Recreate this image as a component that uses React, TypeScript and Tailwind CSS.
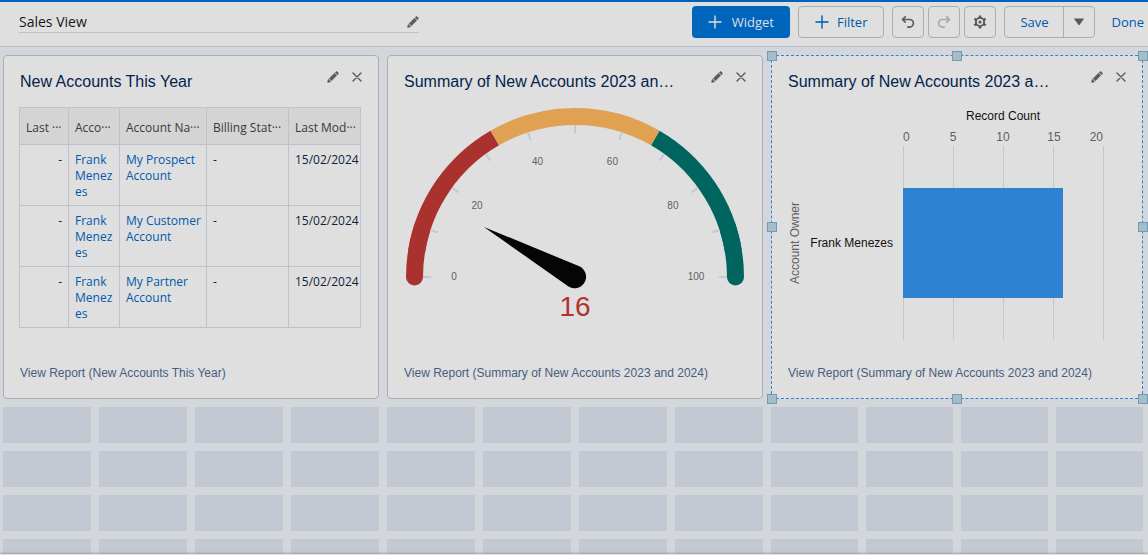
import type { ReactNode } from 'react';

const TITLE_2023_2024 = 'Summary of New Accounts 2023 and 2024';

const COLUMNS = [
  { label: 'Last ···', width: 'w-[49px]' },
  { label: 'Acco···', width: 'w-[51px]' },
  { label: 'Account Na···', width: 'w-[87px]' },
  { label: 'Billing Stat···', width: 'w-[82px]' },
  { label: 'Last Mod···', width: 'w-[72px]' },
];

const ACCOUNTS = [
  { owner: 'Frank Menezes', name: 'My Prospect Account', modified: '15/02/2024' },
  { owner: 'Frank Menezes', name: 'My Customer Account', modified: '15/02/2024' },
  { owner: 'Frank Menezes', name: 'My Partner Account', modified: '15/02/2024' },
];

const HANDLES = [
  '-left-[5px] -top-[5px]',
  'left-1/2 -top-[5px] -translate-x-1/2',
  '-right-[6px] -top-[5px]',
  '-left-[5px] top-1/2 -translate-y-1/2',
  '-right-[6px] top-1/2 -translate-y-1/2',
  '-left-[5px] -bottom-[6px]',
  'left-1/2 -bottom-[6px] -translate-x-1/2',
  '-right-[6px] -bottom-[6px]',
];

function PencilIcon() {
  return (
    <svg viewBox="0 0 52 52" className="size-3" fill="currentColor" stroke="currentColor" strokeWidth="1.5" aria-hidden="true">
      <path d="M9.5 33.4l8.9 8.9c.4.4 1 .4 1.4 0L42 20c.4-.4.4-1 0-1.4l-8.8-8.8c-.4-.4-1-.4-1.4 0L9.5 32.1c-.4.4-.4 1 0 1.3zM36.1 5.7c-.4.4-.4 1 0 1.4l8.8 8.8c.4.4 1 .4 1.4 0l2.5-2.5c1.6-1.5 1.6-3.9 0-5.5l-4.7-4.7c-1.6-1.6-4.1-1.6-5.7 0l-2.3 2.5zM2.1 48.2c-.2 1 .7 1.9 1.7 1.7l10.9-2.6c.4-.1.7-.3.9-.5l.2-.2c.2-.2.3-.9-.1-1.3l-9-9c-.4-.4-1.1-.3-1.3-.1l-.2.2c-.3.3-.4.6-.5.9L2.1 48.2z" />
    </svg>
  );
}

function CloseIcon() {
  return (
    <svg viewBox="0 0 12 12" className="size-3" fill="none" stroke="currentColor" strokeWidth="1.4" strokeLinecap="round" aria-hidden="true">
      <path d="M2 2l8 8M10 2l-8 8" />
    </svg>
  );
}

function PlusIcon() {
  return (
    <svg viewBox="0 0 14 14" className="size-3.5" fill="none" stroke="currentColor" strokeWidth="1.4" strokeLinecap="round" aria-hidden="true">
      <path d="M7 1v12M1 7h12" />
    </svg>
  );
}

function UndoIcon({ className = '' }: { className?: string }) {
  return (
    <svg viewBox="0 0 14 14" className={`size-3.5 ${className}`} fill="none" stroke="currentColor" strokeWidth="1.7" strokeLinecap="round" strokeLinejoin="round" aria-hidden="true">
      <path d="M4.2 1.8L1.6 4.5l2.6 2.7" />
      <path d="M2 4.5h6.6a3.8 3.8 0 0 1 0 7.6H6.8" />
    </svg>
  );
}

function GearIcon() {
  return (
    <svg viewBox="0 0 14 14" className="size-3.5" fill="none" stroke="currentColor" aria-hidden="true">
      <circle cx="7" cy="7" r="4.1" strokeWidth="1.9" />
      <circle cx="7" cy="7" r="1.6" fill="currentColor" stroke="none" />
      <g strokeWidth="2.6">
        <path d="M7 .5v2.7M7 10.8v2.7" />
        <path d="M1.4 3.75l2.3 1.35M10.3 8.9l2.3 1.35" />
        <path d="M12.6 3.75l-2.3 1.35M3.7 8.9l-2.3 1.35" />
      </g>
    </svg>
  );
}

interface IconButtonProps {
  label: string;
  disabled?: boolean;
  children: ReactNode;
}

function IconButton({ label, disabled, children }: IconButtonProps) {
  return (
    <button
      type="button"
      aria-label={label}
      disabled={disabled}
      className="flex size-8 items-center justify-center rounded border border-[#adadad] text-[#5b5a59] disabled:text-[#a9a9a9]"
    >
      {children}
    </button>
  );
}

function Toolbar() {
  return (
    <header className="flex items-start justify-between border-b border-t-2 border-b-[#b9bec9] border-t-[#0062b8] bg-[#dfdfdf] pb-2 pl-[19px] pr-1 pt-1">
      <div className="mt-[5px] flex h-[22px] w-[400px] items-center border-b border-[#bfc3c9]">
        <input
          aria-label="Dashboard name"
          defaultValue="Sales View"
          className="min-w-0 flex-1 bg-transparent text-sm leading-5 text-[#161616] outline-none"
        />
        <button type="button" aria-label="Edit dashboard name" className="text-[#5b5a59]">
          <PencilIcon />
        </button>
      </div>
      <div className="flex items-center text-[13px] leading-5 text-[#0059ad]">
        <button type="button" className="flex h-8 items-center gap-2.5 rounded bg-[#0065bd] px-4 text-[#dfdfdf]">
          <PlusIcon />
          Widget
        </button>
        <button type="button" className="ml-2 flex h-8 items-center gap-2 rounded border border-[#adadad] px-4">
          <PlusIcon />
          Filter
        </button>
        <div className="ml-2 flex gap-1">
          <IconButton label="Undo">
            <UndoIcon />
          </IconButton>
          <IconButton label="Redo" disabled>
            <UndoIcon className="-scale-x-100" />
          </IconButton>
          <IconButton label="Dashboard properties">
            <GearIcon />
          </IconButton>
        </div>
        <div className="ml-2 flex h-8 rounded border border-[#adadad]">
          <button type="button" className="w-[59px] border-r border-[#adadad]">
            Save
          </button>
          <button type="button" aria-label="More save options" className="flex w-[30px] items-center justify-center text-[#5b5a59]">
            <svg viewBox="0 0 10 8" className="h-2 w-2.5" fill="currentColor" aria-hidden="true">
              <path d="M.6.6h8.8c.5 0 .6.3.3.7L5.4 7c-.2.3-.6.3-.8 0L.3 1.3C0 .9.1.6.6.6z" />
            </svg>
          </button>
        </div>
        <button type="button" className="ml-4">
          Done
        </button>
      </div>
    </header>
  );
}

interface WidgetCardProps {
  title: string;
  reportLabel: string;
  selected?: boolean;
  children: ReactNode;
}

function WidgetCard({ title, reportLabel, selected, children }: WidgetCardProps) {
  return (
    <article
      className={
        selected
          ? 'relative col-span-4 row-span-8 flex min-w-0 flex-col border border-dashed border-[#2f84d0] bg-[#dfdfdf]'
          : 'relative col-span-4 row-span-8 flex min-w-0 flex-col rounded border border-[#abaeb3] bg-[#dfdfdf]'
      }
    >
      <div className="flex items-start gap-[30px] pl-4 pr-[9px] pt-[9px]">
        <h2 className="mt-[5px] min-w-0 flex-1 truncate font-['Liberation_Sans',Arial,sans-serif] text-base leading-6 text-[#03234d]">
          {title}
        </h2>
        <div className="flex text-[#5b5a59]">
          <button type="button" aria-label={`Edit ${title}`} className="flex size-6 items-center justify-center">
            <PencilIcon />
          </button>
          <button type="button" aria-label={`Remove ${title}`} className="flex size-6 items-center justify-center">
            <CloseIcon />
          </button>
        </div>
      </div>
      <div className="min-h-0 flex-1">{children}</div>
      <footer className="px-4 pb-[15px] font-['Liberation_Sans',Arial,sans-serif] text-xs leading-5">
        <a href="#report" className="text-[#475c82]">
          View Report ({reportLabel})
        </a>
      </footer>
      {selected &&
        HANDLES.map((position) => (
          <span key={position} className={`absolute size-2.5 border border-[#6d9bb8] bg-[#a6bdc9] ${position}`} />
        ))}
    </article>
  );
}

function AccountsTable() {
  return (
    <div className="pl-[15px] pr-[17px] pt-[13px]">
      <table className="w-full table-fixed border-collapse border border-[#bcc3cf] text-xs leading-4 text-[#0f1f3a]">
        <thead>
          <tr className="h-[37px] border-b border-b-[#8a9bb2] bg-[#d4d4d4] text-[#3a3a3a]">
            {COLUMNS.map((column) => (
              <th key={column.label} scope="col" className={`${column.width} whitespace-nowrap border-x border-[#bcc3cf] pl-1.5 pt-1 text-left font-normal`}>
                {column.label}
              </th>
            ))}
          </tr>
        </thead>
        <tbody>
          {ACCOUNTS.map((account) => (
            <tr key={account.name} className="align-top">
              <td className="border border-[#bcc3cf] px-1.5 pb-[5px] pt-[7px] text-right">-</td>
              <td className="border border-[#bcc3cf] px-1.5 pb-[5px] pt-[7px] wrap-anywhere">
                <a href="#owner" className="text-[#0059ad]">{account.owner}</a>
              </td>
              <td className="border border-[#bcc3cf] pb-[5px] pl-1.5 pt-[7px]">
                <a href="#account" className="text-[#0059ad]">{account.name}</a>
              </td>
              <td className="border border-[#bcc3cf] px-1.5 pb-[5px] pt-[7px]">-</td>
              <td className="whitespace-nowrap border border-[#bcc3cf] pb-[5px] pl-1.5 pt-[7px]">{account.modified}</td>
            </tr>
          ))}
        </tbody>
      </table>
    </div>
  );
}

// Point on the dial for a value of 0-100, measured from the hub at (170, 173)
function dialPoint(value: number, radius: number) {
  const angle = Math.PI * (1 - value / 100);
  return { x: 170 + radius * Math.cos(angle), y: 173 - radius * Math.sin(angle) };
}

function dialArc(from: number, to: number) {
  const start = dialPoint(from, 160.5);
  const end = dialPoint(to, 160.5);
  return `M${start.x} ${start.y}A160.5 160.5 0 0 1 ${end.x} ${end.y}`;
}

function GaugeChart() {
  const third = 100 / 3;

  return (
    <svg viewBox="0 0 340 220" className="mx-auto mt-2.5 h-[220px] w-[340px] font-['Liberation_Sans',Arial,sans-serif]" role="img" aria-label="Record count gauge">
      <g fill="none" strokeWidth="17">
        <path d={dialArc(0, 10)} stroke="#aa322e" strokeLinecap="round" />
        <path d={dialArc(90, 100)} stroke="#00655e" strokeLinecap="round" />
        <path d={dialArc(5, third)} stroke="#aa322e" />
        <path d={dialArc(third * 2, 95)} stroke="#00655e" />
        <path d={dialArc(third, third * 2)} stroke="#e0a152" />
      </g>
      {[0, 10, 20, 30, 40, 50, 60, 70, 80, 90, 100].map((value) => {
        const outer = dialPoint(value, 152);
        const inner = dialPoint(value, 144);
        return <line key={value} x1={outer.x} y1={outer.y} x2={inner.x} y2={inner.y} stroke="#c3c9d3" strokeWidth="2" />;
      })}
      {[0, 20, 40, 60, 80, 100].map((value) => {
        const { x, y } = dialPoint(value, 121);
        return (
          <text key={value} x={x} y={y + 3} textAnchor="middle" fontSize="10" fill="#5f5f5f">
            {value}
          </text>
        );
      })}
      <g transform="rotate(28.8 170 173)">
        <path d="M66 173L168 161.6a11.5 11.5 0 1 1 0 22.8z" fill="#050505" />
      </g>
      <text x="170" y="212" textAnchor="middle" fontSize="28" fill="#b1332f">
        16
      </text>
    </svg>
  );
}

function BarChart() {
  return (
    <svg viewBox="0 0 338 240" className="ml-4 mt-2.5 h-[240px] w-[338px] font-['Liberation_Sans',Arial,sans-serif]" fontSize="12" role="img" aria-label="Record count by account owner">
      <text x="215" y="16" textAnchor="middle" fill="#111111">Record Count</text>
      <g fill="#5f5f5f">
        <text x="115" y="37">0</text>
        <text x="165" y="37" textAnchor="middle">5</text>
        <text x="215" y="37" textAnchor="middle">10</text>
        <text x="266" y="37" textAnchor="middle">15</text>
        <text x="315" y="37" textAnchor="end">20</text>
        <text transform="translate(11 139) rotate(-90)" textAnchor="middle">Account Owner</text>
      </g>
      {[115, 165, 215, 265, 315].map((x) => (
        <line key={x} x1={x + 0.5} x2={x + 0.5} y1="42" y2="236" stroke="#c6c7cb" />
      ))}
      <text x="105" y="143" textAnchor="end" fill="#111111">Frank Menezes</text>
      <rect x="115" y="84" width="160" height="110" fill="#2d83d1" />
    </svg>
  );
}

export default function App() {
  return (
    <div className="flex h-screen flex-col bg-[#d3d7dc] font-['Open_Sans','Noto_Sans',sans-serif]">
      <Toolbar />
      <main className="min-h-0 flex-1 overflow-hidden pl-[3px] pr-[5px] pt-2">
        <div className="grid auto-rows-[36px] grid-cols-[repeat(8,minmax(0,88fr))_repeat(4,minmax(0,87fr))] gap-2">
          <WidgetCard title="New Accounts This Year" reportLabel="New Accounts This Year">
            <AccountsTable />
          </WidgetCard>
          <WidgetCard title={TITLE_2023_2024} reportLabel={TITLE_2023_2024}>
            <GaugeChart />
          </WidgetCard>
          <WidgetCard title={TITLE_2023_2024} reportLabel={TITLE_2023_2024} selected>
            <BarChart />
          </WidgetCard>
          {Array.from({ length: 48 }, (_, index) => (
            <div key={index} className="bg-[#c2c9d2]" />
          ))}
        </div>
      </main>
      <div className="relative h-px bg-[#dfdfdf] shadow-[0_-1px_2px_#8a8f98]" />
    </div>
  );
}
